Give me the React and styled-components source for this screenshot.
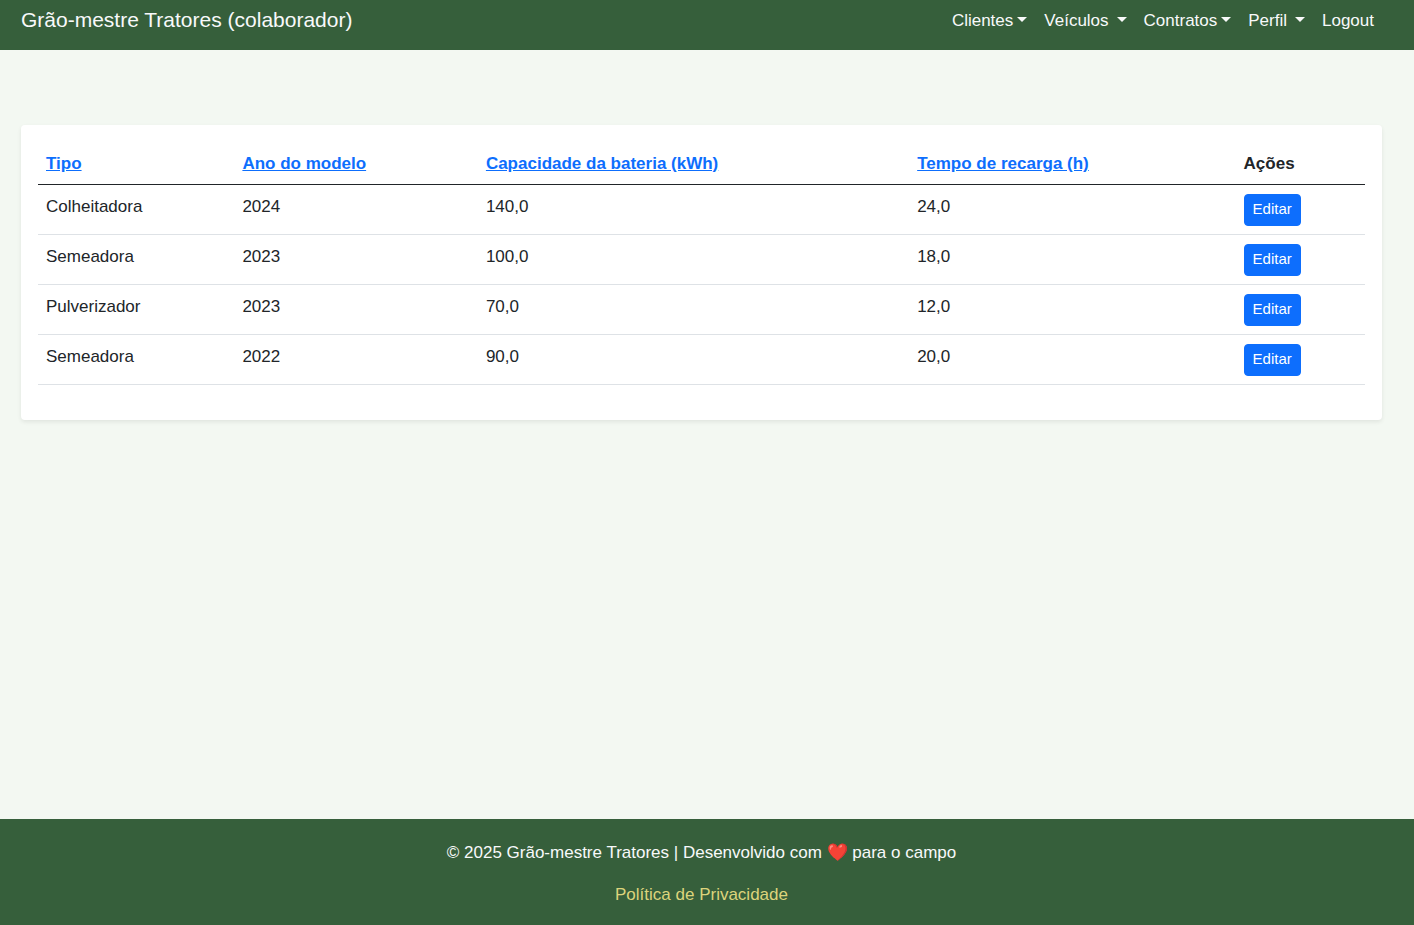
import React from "react";
import styled, { createGlobalStyle } from "styled-components";

const GlobalStyle = createGlobalStyle`
  *, *::before, *::after { box-sizing: border-box; }
  body {
    margin: 0;
    font-family: "Liberation Sans", Arial, sans-serif;
    font-size: 17px;
    line-height: 25px;
    color: #212529;
    background: #f3f8f2;
  }
`;

const Page = styled.div`
  min-height: 100vh;
  display: flex;
  flex-direction: column;
`;

const Navbar = styled.header`
  display: flex;
  justify-content: space-between;
  align-items: center;
  padding: 4px 40px 14px 21px;
  background: #365f3b;
`;

const Brand = styled.a`
  color: #f8f9fa;
  font-size: 21px;
  line-height: 32px;
  text-decoration: none;
`;

const Menu = styled.nav`
  display: flex;
  align-items: center;
  gap: 17px;
`;

const MenuToggle = styled.button`
  display: flex;
  align-items: center;
  gap: ${({ $wide }) => ($wide ? "8px" : "4px")};
  padding: 0;
  border: 0;
  background: none;
  color: #f8f9fa;
  font: inherit;
  cursor: pointer;

  &::after {
    content: "";
    margin-bottom: 2px;
    border-top: 5px solid currentColor;
    border-left: 5px solid transparent;
    border-right: 5px solid transparent;
  }
`;

const MenuLink = styled.a`
  color: #f8f9fa;
  text-decoration: none;
`;

const Main = styled.main`
  flex: 1;
  padding: 75px 32px 21px 21px;
`;

const Card = styled.section`
  padding: 17px 17px 35px;
  border-radius: 4px;
  background: #fff;
  box-shadow: 0 2px 4px rgba(0, 0, 0, 0.08);
`;

const Table = styled.table`
  width: 100%;
  table-layout: fixed;
  border-collapse: collapse;
`;

const Column = styled.col`
  width: ${({ $width }) => $width};
`;

const HeadCell = styled.th`
  padding: 9px 8px 8px;
  border-bottom: 1px solid #212529;
  text-align: left;
  font-weight: 700;
`;

const SortLink = styled.a`
  color: #0d6efd;
`;

const Cell = styled.td`
  padding: 9px 8px 8px;
  border-bottom: 1px solid #dee2e6;
  vertical-align: top;
`;

const EditButton = styled.button`
  display: block;
  height: 32px;
  padding: 0 8px 2px;
  border: 1px solid #0d6efd;
  border-radius: 4px;
  background: #0d6efd;
  color: #fff;
  font: inherit;
  font-size: 15px;
  line-height: 22px;
  cursor: pointer;
`;

const Footer = styled.footer`
  display: flex;
  flex-direction: column;
  align-items: center;
  gap: 17px;
  padding: 21px 11px 18px 0;
  background: #365f3b;
  color: #f8f9fa;
`;

const FooterText = styled.p`
  margin: 0;
`;

const PrivacyLink = styled.a`
  color: #dcd47c;
  text-decoration: none;
`;

const menus = [
  { label: "Clientes" },
  { label: "Veículos", wide: true },
  { label: "Contratos" },
  { label: "Perfil", wide: true },
];

const columns = [
  { label: "Tipo", width: "14.8%", sortable: true },
  { label: "Ano do modelo", width: "18.35%", sortable: true },
  { label: "Capacidade da bateria (kWh)", width: "32.5%", sortable: true },
  { label: "Tempo de recarga (h)", width: "24.6%", sortable: true },
  { label: "Ações", width: "9.75%" },
];

const vehicles = [
  ["Colheitadora", "2024", "140,0", "24,0"],
  ["Semeadora", "2023", "100,0", "18,0"],
  ["Pulverizador", "2023", "70,0", "12,0"],
  ["Semeadora", "2022", "90,0", "20,0"],
];

export default function App() {
  return (
    <>
      <GlobalStyle />
      <Page>
        <Navbar>
          <Brand href="#">Grão-mestre Tratores (colaborador)</Brand>
          <Menu>
            {menus.map((menu) => (
              <MenuToggle key={menu.label} type="button" aria-haspopup="true" $wide={menu.wide}>
                {menu.label}
              </MenuToggle>
            ))}
            <MenuLink href="#">Logout</MenuLink>
          </Menu>
        </Navbar>
        <Main>
          <Card>
            <Table>
              <colgroup>
                {columns.map((column) => (
                  <Column key={column.label} $width={column.width} />
                ))}
              </colgroup>
              <thead>
                <tr>
                  {columns.map((column) => (
                    <HeadCell key={column.label} scope="col">
                      {column.sortable ? <SortLink href="#">{column.label}</SortLink> : column.label}
                    </HeadCell>
                  ))}
                </tr>
              </thead>
              <tbody>
                {vehicles.map((values, row) => (
                  <tr key={row}>
                    {values.map((value, index) => (
                      <Cell key={index}>{value}</Cell>
                    ))}
                    <Cell>
                      <EditButton type="button">Editar</EditButton>
                    </Cell>
                  </tr>
                ))}
              </tbody>
            </Table>
          </Card>
        </Main>
        <Footer>
          <FooterText>© 2025 Grão-mestre Tratores | Desenvolvido com ❤️ para o campo</FooterText>
          <PrivacyLink href="#">Política de Privacidade</PrivacyLink>
        </Footer>
      </Page>
    </>
  );
}
